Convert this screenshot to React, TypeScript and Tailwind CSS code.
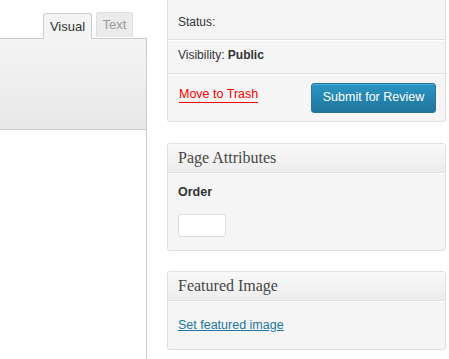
import React from 'react';

const sans = { fontFamily: '"Liberation Sans", Arial, sans-serif' };
const serif = { fontFamily: '"Liberation Serif", "Times New Roman", serif' };

const Metabox: React.FC<{ title: string; children: React.ReactNode; className?: string }> = ({
    title,
    children,
    className = '',
}) => (
    <div className={`rounded-[3px] border border-[#dfdfdf] bg-[#f5f5f5] shadow-[inset_0_1px_0_#fff] ${className}`}>
        <div className="flex h-[29px] items-center border-b border-[#dfdfdf] bg-gradient-to-b from-[#f9f9f9] to-[#ececec] px-[10px] shadow-[0_1px_0_#fff]">
            <h3 className="text-[16px] leading-none text-[#464646]" style={serif}>
                {title}
            </h3>
        </div>
        {children}
    </div>
);

export default function App() {
    return (
        <div className="flex h-[359px] w-[449px] overflow-hidden bg-white text-[#333]" style={sans}>
            {/* editor column */}
            <div className="flex w-[147px] shrink-0 flex-col">
                <div className="flex h-[38px] items-end justify-end gap-[4px] pr-[14px]">
                    <div className="relative z-10 -mb-px flex h-[26px] w-[49px] items-center justify-center rounded-t-[3px] border border-b-0 border-[#ccc] bg-[#f4f4f4] text-[13px] text-[#333]">
                        Visual
                    </div>
                    <div className="mb-px flex h-[25px] w-[37px] items-center justify-center rounded-t-[3px] border border-b-0 border-[#dfdfdf] bg-[#ebebeb] text-[13px] text-[#999]">
                        Text
                    </div>
                </div>
                <div className="h-[92px] border-y border-r border-[#ccc] bg-gradient-to-b from-[#f4f4f4] to-[#e8e8e8]" />
                <div className="flex-1 border-r border-[#ccc] bg-white" />
            </div>

            {/* sidebar */}
            <div className="ml-[20px] flex w-[279px] shrink-0 flex-col">
                <div className="rounded-b-[3px] border border-t-0 border-[#dfdfdf] bg-[#f5f5f5]">
                    <div className="flex h-[40px] items-center border-b border-[#dfdfdf] px-[10px] pt-[5px] text-[12px]">
                        Status:
                    </div>
                    <div className="flex h-[34px] items-center border-b border-[#dfdfdf] px-[10px] pb-[3px] text-[12px] shadow-[inset_0_1px_0_#fff]">
                        Visibility:&nbsp;<b>Public</b>
                    </div>
                    <div className="flex h-[47px] items-center justify-between pl-[11px] pr-[9px] shadow-[inset_0_1px_0_#fff]">
                        <a className="-mt-[6px] border-b border-[#f00] text-[12.5px] leading-[15px] text-[#f00]">
                            Move to Trash
                        </a>
                        <button className="h-[30px] w-[125px] rounded-[3px] border border-[#21759b] bg-gradient-to-b from-[#2a95c5] to-[#21759b] text-[12.5px] text-white shadow-[inset_0_1px_0_rgba(120,200,230,0.5)]">
                            Submit for Review
                        </button>
                    </div>
                </div>

                <Metabox title="Page Attributes" className="mt-[21px]">
                    <div className="px-[10px] pb-[13px] pt-[10px]">
                        <p className="text-[12.5px] font-bold leading-[18px]">Order</p>
                        <div className="mt-[13px] h-[23px] w-[48px] rounded-[3px] border border-[#dfdfdf] bg-white" />
                    </div>
                </Metabox>

                <Metabox title="Featured Image" className="mt-[20px]">
                    <div className="px-[10px] pb-[13px] pt-[11px]">
                        <a className="text-[12.5px] leading-[16px] text-[#21759b] underline">Set featured image</a>
                    </div>
                </Metabox>
            </div>
        </div>
    );
}
